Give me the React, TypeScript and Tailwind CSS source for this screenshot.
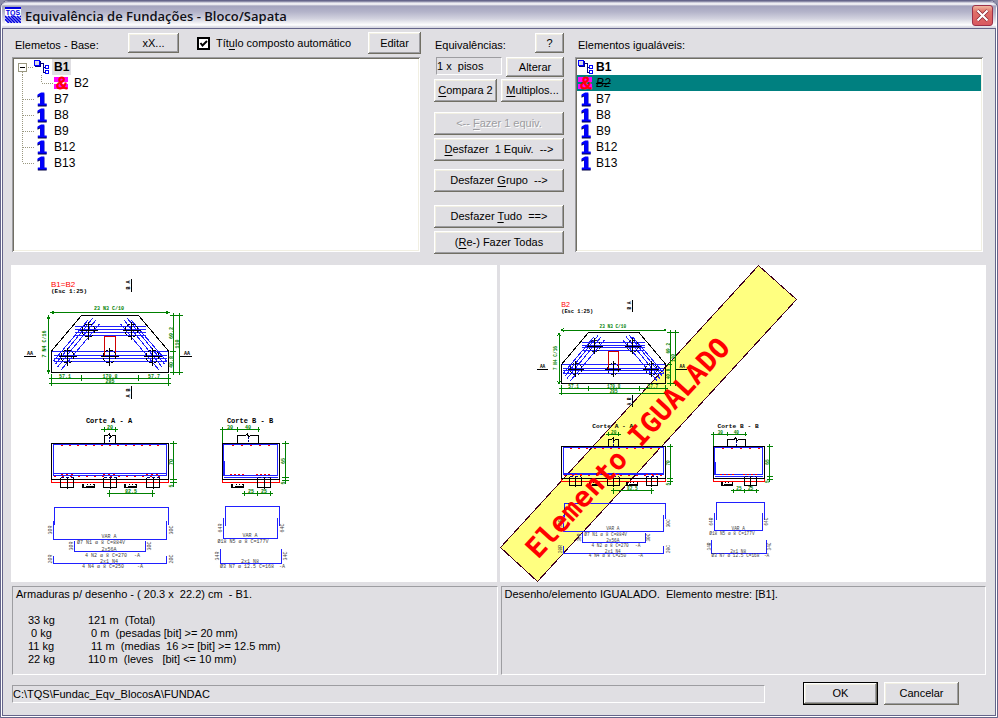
import type { ReactNode } from "react";

const BUTTON_FACE =
  "flex items-center justify-center whitespace-pre bg-[#e0dfe3] shadow-[inset_-1px_-1px_0_#716f64,inset_1px_1px_0_#ffffff,inset_-2px_-2px_0_#9d9da1,inset_2px_2px_0_#f1efe2]";

function PushButton({ className = "", children, disabled = false }: { className?: string; children: ReactNode; disabled?: boolean }) {
  return (
    <button
      type="button"
      disabled={disabled}
      className={`${BUTTON_FACE} ${disabled ? "text-[#9d9da1] [text-shadow:1px_1px_0_#ffffff]" : "text-black"} ${className}`}
    >
      <span>{children}</span>
    </button>
  );
}

function Key({ children }: { children: ReactNode }) {
  return <span className="underline underline-offset-2">{children}</span>;
}

function TqsLogo() {
  return (
    <svg viewBox="0 0 16 16" className="size-4 shrink-0" aria-hidden="true">
      <rect width="16" height="16" fill="#fff" />
      <rect width="16" height="2" fill="#0000e0" />
      <text x="8" y="8" textAnchor="middle" fontSize="7" fontFamily="Liberation Sans" fontWeight="700" fill="#0000e0">TQS</text>
      <g stroke="#0000e0" strokeWidth="1.7">
        <path d="M0 9l7 7M3 9l7 7M6 9l7 7M9 9l7 7M12 9l4 4M0 12l4 4M15 9l1 1" />
      </g>
    </svg>
  );
}

function GroupIcon() {
  return (
    <svg viewBox="0 0 16 16" className="size-4 shrink-0" shapeRendering="crispEdges" aria-hidden="true">
      <path d="M7 4.500h2.500v9H12M9.500 8.500H12" fill="none" stroke="#000080" />
      <rect x="0.500" y="1.500" width="5" height="5" fill="#d8d8e8" stroke="#0000ff" />
      <path d="M1 7.500h5.500V2" fill="none" stroke="#000080" />
      <rect x="11.500" y="6.500" width="3" height="3" fill="#fff" stroke="#0000ff" />
      <rect x="11.500" y="11.500" width="3" height="3" fill="#fff" stroke="#0000ff" />
    </svg>
  );
}

function LinkedIcon() {
  return (
    <svg viewBox="0 0 16 16" className="size-4 shrink-0 overflow-visible" aria-hidden="true">
      <rect x="0" y="2" width="14" height="5" fill="#ff00ff" />
      <rect x="0" y="9" width="14" height="5" fill="#ff00ff" />
      <text x="8" y="14" textAnchor="middle" fontSize="17" fontFamily="Liberation Sans" fill="#ff0000" stroke="#ff0000" strokeWidth="0.800">&amp;</text>
    </svg>
  );
}

function SingleIcon() {
  return (
    <svg viewBox="0 0 16 16" className="size-4 shrink-0 overflow-visible drop-shadow-[0_1px_0_#000040]" aria-hidden="true">
      <text x="8" y="14" textAnchor="middle" fontSize="17" fontFamily="DejaVu Serif" fontWeight="700" fill="#0000ff" stroke="#0000ff" strokeWidth="1">1</text>
    </svg>
  );
}

function Branch({ kind }: { kind: "root" | "through" | "tee" | "end" | "child" }) {
  return (
    <svg viewBox="0 0 20 16" className="h-4 w-5 shrink-0" shapeRendering="crispEdges" fill="none" aria-hidden="true">
      <g stroke="#9a9880" strokeDasharray="1 1">
        {kind === "root" && <path d="M14 8.500h6M8.500 13v3" />}
        {kind === "through" && <path d="M8.500 0v16" />}
        {kind === "tee" && <path d="M8.500 0v16M9 8.500h11" />}
        {kind === "end" && <path d="M8.500 0v8M9 8.500h11" />}
        {kind === "child" && <path d="M7.500 0v8M8 8.500h11" />}
      </g>
      {kind === "root" && (
        <>
          <rect x="4.500" y="4.500" width="8" height="8" fill="#fff" stroke="#9a9880" />
          <path d="M6 8.500h5" stroke="#000" />
        </>
      )}
    </svg>
  );
}

const TREE_FRAME =
  "mx-px h-[195px] bg-white p-[2px] text-[12px] leading-4 shadow-[inset_1px_1px_0_#9d9da1,inset_-1px_-1px_0_#ffffff,inset_2px_2px_0_#716f64,inset_-2px_-2px_0_#f1efe2]";

const SINGLES = ["B7", "B8", "B9", "B12", "B13"];

function BaseTree() {
  return (
    <ul className={TREE_FRAME} role="tree" aria-label="Elemetos - Base">
      <li className="flex h-4" role="treeitem">
        <Branch kind="root" />
        <GroupIcon />
        <span className="ml-0.5 bg-[#e0dfe3] px-0.5 font-bold">B1</span>
      </li>
      <li className="flex h-4" role="treeitem">
        <Branch kind="through" />
        <Branch kind="child" />
        <LinkedIcon />
        <span className="pl-1">B2</span>
      </li>
      {SINGLES.map((name, i) => (
        <li key={name} className="flex h-4" role="treeitem">
          <Branch kind={i === SINGLES.length - 1 ? "end" : "tee"} />
          <SingleIcon />
          <span className="pl-1">{name}</span>
        </li>
      ))}
    </ul>
  );
}

function EqualTree() {
  return (
    <ul className={TREE_FRAME} role="tree" aria-label="Elementos igualáveis">
      <li className="flex h-4 pl-px" role="treeitem">
        <GroupIcon />
        <span className="pl-0.5 font-bold">B1</span>
      </li>
      <li className="flex h-4 bg-[#008080] pl-px" role="treeitem" aria-selected="true">
        <LinkedIcon />
        <span className="pl-0.5 italic line-through">B2</span>
      </li>
      {SINGLES.map((name) => (
        <li key={name} className="flex h-4 pl-px" role="treeitem">
          <SingleIcon />
          <span className="pl-0.5">{name}</span>
        </li>
      ))}
    </ul>
  );
}

const PILES = [
  [88.5, 330.5],
  [131.5, 330.5],
  [67.5, 356.5],
  [109.5, 356.5],
  [152.5, 356.5],
];

function Note({ x, y, children, turn = false, size = 5, fill = "#008000" }: { x: number; y: number; children: ReactNode; turn?: boolean; size?: number; fill?: string }) {
  return (
    <text x={x} y={y} fontSize={size} fill={fill} textAnchor="middle" transform={turn ? `rotate(-90 ${x} ${y})` : undefined}>
      {children}
    </text>
  );
}

function PlanView({ title }: { title: string }) {
  return (
    <g>
      <text x="51" y="287" fontSize="8" fill="#ff0000" fontFamily="Liberation Sans">{title}</text>
      <text x="51" y="293" fontSize="6" fontWeight="700" fill="#000">(Esc 1:25)</text>
      <g stroke="#2020ff">
        <path d="M74.500 326.500h71M74.500 329.500h71M74.500 332.500h71M74.500 335.500h71" />
        <path d="M52 351.500h116M53.500 355.500h113M53.500 358.500h113M53.500 361.500h113" />
        <path d="M55.500 364L92.500 318.500M57.500 367L96 320M61 370L99.500 324M53.500 361L88 320" />
        <path d="M164.500 364L127.500 318.500M162 367L124 320M159 370L120.500 324M166.500 361L131 320" />
      </g>
      <path d="M51.500 372.500V351L81.500 315.500h57L168.500 351v21.500z" stroke="#000" />
      <path d="M104.500 356v-19.500h11V356" stroke="#d00000" />
      {PILES.map(([x, y]) => (
        <g key={`${x}-${y}`} stroke="#000">
          <path d={`M${x - 9} ${y}h18M${x} ${y - 9}v18`} />
          <circle cx={x} cy={y} r="6.500" strokeDasharray="3 2" />
        </g>
      ))}
      <g stroke="#008000">
        <path d="M51 312.500h118M54 311l-3 1.500 3 1.500M166 311l3 1.500-3 1.500" />
        <path d="M48.500 316v57M47 319l1.500-3 1.500 3M47 370l1.500 3 1.500-3" />
        <path d="M173.500 313v62M179.500 313v62M170 315.500h13M170 351.500h6M170 372.500h13" />
        <path d="M49 378.500h122M49 383.500h122M51.500 374v12M81.500 375v6M138.500 375v6M168.500 374v12" />
      </g>
      <g fontWeight="700">
        <Note x={109} y={310}>23 N3 C/10</Note>
        <Note x={46} y={344} turn>7 N4 C/16</Note>
        <Note x={173} y={333} turn>69.2</Note>
        <Note x={173} y={362} turn>40.8</Note>
        <Note x={179} y={344} turn>110</Note>
        <Note x={65} y={378}>57.1</Note>
        <Note x={110} y={378}>170.8</Note>
        <Note x={154} y={378}>57.7</Note>
        <Note x={110} y={383}>285</Note>
      </g>
      <path d="M131.500 279v13M131.500 386v13M24 356.500h12M180 356.500h12" stroke="#000" />
      <g fill="#000" fontWeight="700">
        <Note x={130} y={282} turn fill="#000">A</Note>
        <Note x={130} y={288} turn fill="#000">B</Note>
        <Note x={130} y={390} turn fill="#000">B</Note>
        <Note x={130} y={396} turn fill="#000">A</Note>
        <Note x={30} y={355} fill="#000">AA</Note>
        <Note x={187} y={355} fill="#000">AA</Note>
      </g>
    </g>
  );
}

function Pile({ x }: { x: number }) {
  return (
    <g stroke="#000">
      <path d={`M${x} 477.500v10h13v-10M${x + 6.5} 477v12M${x} 479.500h13`} />
      <path d={`M${x} 477.500h13`} strokeDasharray="3 2" stroke="#000080" />
    </g>
  );
}

function Block({ x }: { x: number }) {
  return (
    <g stroke="#000">
      <path d={`M${x} 483.500v4h12v-4M${x + 1} 484v3M${x + 3} 486.500h9`} />
      <path d={`M${x + 4} 484.500h7`} strokeDasharray="1 2" />
    </g>
  );
}

function SectionA() {
  return (
    <g>
      <Note x={109} y={423} size={7} fill="#000"><tspan fontWeight="700">Corte A - A</tspan></Note>
      <path d="M104.500 443v-7.500h3l2-2 1 4 2-2h3v7.500" stroke="#000" />
      <path d="M109.500 437v7" stroke="#000080" strokeDasharray="2 1" />
      <path d="M51.500 443.500h117v36h-117z" stroke="#000" />
      <path d="M53.500 444.500h113v31h-113zM53.500 473.500h113" stroke="#2020ff" />
      <path d="M61 445.500h104" stroke="#ff0000" strokeDasharray="2 6" />
      <path d="M61 474.500h14M103 474.500h14M146 474.500h14" stroke="#ff0000" strokeDasharray="2 3" />
      <path d="M54 476.500h112" stroke="#ff0000" strokeDasharray="2 6" />
      <path d="M51.500 480v2.500h117V480" stroke="#ff0000" />
      <Pile x={60.5} />
      <Pile x={103.5} />
      <Pile x={146.5} />
      <Block x={82.5} />
      <Block x={124.5} />
      <g stroke="#008000">
        <path d="M101 429.500h17M104.500 427v5M115.500 427v5" />
        <path d="M173.500 441v46M170 443.500h7M170 479.500h7M170 482.500h7" />
        <path d="M107 493.500h48M109.500 490v7M152.500 490v7" />
      </g>
      <g fontWeight="700">
        <Note x={110} y={429}>20</Note>
        <Note x={173} y={462} turn>70</Note>
        <Note x={173} y={486} turn>5</Note>
        <Note x={131} y={493}>82.5</Note>
      </g>
      <path d="M54.500 525v-17.500h114V525M53.500 521v18.500h113V521" stroke="#2020ff" />
      <path d="M74.500 541v10.500h71V541M53.500 556v7.500h113V556" stroke="#2020ff" />
      <Note x={109} y={538} fill="#404040">VAR A</Note>
      <Note x={101} y={544} fill="#404040">Ø7 N1 ø 8 C=884V</Note>
      <Note x={109} y={551} fill="#404040">2x56A</Note>
      <Note x={106} y={557} fill="#404040">4 N2 ø 8 C=270</Note>
      <Note x={137} y={557} fill="#404040">-A</Note>
      <Note x={109} y={563} fill="#404040">2x1 N4</Note>
      <Note x={103} y={568} fill="#404040">4 N4 ø 8 C=250</Note>
      <Note x={140} y={568} fill="#404040">-A</Note>
      <Note x={52} y={530} turn fill="#404040">30R</Note>
      <Note x={173} y={530} turn fill="#404040">30C</Note>
      <Note x={73} y={546} turn fill="#404040">30R</Note>
      <Note x={151} y={546} turn fill="#404040">30C</Note>
      <Note x={52} y={559} turn fill="#404040">20R</Note>
      <Note x={173} y={559} turn fill="#404040">20C</Note>
    </g>
  );
}

function SectionB() {
  return (
    <g>
      <Note x={250} y={423} size={7} fill="#000"><tspan fontWeight="700">Corte B - B</tspan></Note>
      <path d="M237.500 443v-7.500h8l2-2 1 4 2-2h8v7.500" stroke="#000" />
      <path d="M248.500 437v7" stroke="#000080" strokeDasharray="2 1" />
      <path d="M222.500 443.500h57v36h-57z" stroke="#000" />
      <path d="M223.500 444.500h54v31h-54zM224.500 461v14M223.500 477.500h54" stroke="#2020ff" />
      <path d="M232 445.500h44" stroke="#ff0000" strokeDasharray="2 7" />
      <path d="M230 474.500h16M256 474.500h16" stroke="#ff0000" strokeDasharray="2 2" />
      <path d="M222.500 480v2.500h57V480" stroke="#ff0000" />
      <Pile x={257.5} />
      <Block x={231.5} />
      <g stroke="#008000">
        <path d="M220 429.500h40M222.500 427v16M237.500 427v5M258.500 427v5" />
        <path d="M285.500 441v43M282 443.500h7M282 477.500h7M282 480.500h7" />
        <path d="M242 493.500h31M244.500 491v5M257.500 491v5M270.500 491v5" />
      </g>
      <g fontWeight="700">
        <Note x={230} y={429}>30</Note>
        <Note x={248} y={429}>40</Note>
        <Note x={285} y={461} turn>65</Note>
        <Note x={285} y={483} turn>5</Note>
        <Note x={251} y={493}>25</Note>
        <Note x={264} y={493}>25</Note>
      </g>
      <path d="M225.500 526v-19.500h54V526M223.500 518v20.500h54V518M220.500 549v14.500h61V549" stroke="#2020ff" />
      <Note x={250} y={537} fill="#404040">VAR A</Note>
      <Note x={243} y={543} fill="#404040">Ø18 N5 ø 8 C=177V</Note>
      <Note x={250} y={563} fill="#404040">2x1 N8</Note>
      <Note x={247} y={568} fill="#404040">Ø3 N7 ø 12.5 C=168</Note>
      <Note x={282} y={568} fill="#404040">-A</Note>
      <Note x={222} y={528} turn fill="#404040">64R</Note>
      <Note x={284} y={528} turn fill="#404040">64C</Note>
      <Note x={219} y={556} turn fill="#404040">34R</Note>
      <Note x={287} y={556} turn fill="#404040">34C</Note>
    </g>
  );
}

function Drawing({ title }: { title: string }) {
  return (
    <g fill="none" fontFamily="Liberation Mono, monospace" shapeRendering="crispEdges" className="[&_path]:[vector-effect:non-scaling-stroke]">
      <PlanView title={title} />
      <SectionA />
      <SectionB />
    </g>
  );
}

const INFO_BOX =
  "h-[89px] min-w-0 flex-1 border border-b-white border-l-[#9d9da1] border-r-white border-t-[#9d9da1] px-[3px] pt-px leading-[13px] whitespace-pre";

const TOTALS = [
  ["33 kg", "121 m  (Total)"],
  [" 0 kg", " 0 m  (pesadas [bit] >= 20 mm)"],
  ["11 kg", " 11 m  (medias  16 >= [bit] >= 12.5 mm)"],
  ["22 kg", "110 m  (leves   [bit] <= 10 mm)"],
];

export default function App() {
  return (
    <div className="bg-[#8f8fa8]">
      <main className="flex min-h-screen flex-col rounded-t-lg border border-[#65658a] bg-white px-px pb-px font-['Liberation_Sans',Arial,sans-serif] text-[11px] text-black">
        <header className="flex h-[27px] shrink-0 items-center gap-1 rounded-t-md border-t border-[#8c8ca8] bg-[linear-gradient(#b8b8cc_0px,#ffffff_2px,#a4a4be_4px,#b4b4ca_10px,#d4d4e0_17px,#ffffff_23px,#d8d8e2_25px)] px-[3px]">
          <TqsLogo />
          <h1 className="flex-1 pt-0.5 font-['Open_Sans',sans-serif] text-[13px] leading-5 font-semibold text-[#101018]">
            Equivalência de Fundações - Bloco/Sapata
          </h1>
          <button
            type="button"
            aria-label="Fechar"
            className="flex size-[21px] items-center justify-center rounded-[3px] border border-[#9c3048] bg-[linear-gradient(#f0b8a0,#e07068_30%,#d85860)]"
          >
            <svg viewBox="0 0 13 13" className="size-[13px]" aria-hidden="true">
              <path d="M1.500 1.500l10 10M11.500 1.500l-10 10" stroke="#802030" strokeWidth="3.500" />
              <path d="M1.500 1.500l10 10M11.500 1.500l-10 10" stroke="#fff" strokeWidth="2.200" />
            </svg>
          </button>
        </header>

        <div className="flex flex-1 flex-col border border-[#65658a] bg-[#e0dfe3] pr-[9px] pb-[9px] pl-2">
          <div className="flex pr-0.5">
            <section className="min-w-0 flex-1">
              <div className="flex h-7 items-center">
                <h2 className="w-[117px] pt-1 pl-1">Elemetos - Base:</h2>
                <PushButton className="h-5 w-[51px]">xX...</PushButton>
                <label className="ml-[18px] flex items-center gap-1.5">
                  <span className="relative flex size-[13px]">
                    <input type="checkbox" defaultChecked className="peer size-[13px] appearance-none border-2 border-black bg-white" />
                    <svg viewBox="0 0 13 13" className="pointer-events-none absolute inset-0 hidden size-[13px] peer-checked:block" aria-hidden="true">
                      <path d="M3.500 6l2 2.500 4.500-4.500" fill="none" stroke="#000" strokeWidth="2" />
                    </svg>
                  </span>
                  <span>Tít<Key>u</Key>lo composto automático</span>
                </label>
                <PushButton className="ml-auto h-[22px] w-[53px]">Editar</PushButton>
              </div>
              <BaseTree />
            </section>

            <section className="mr-2.5 ml-[13px] w-[130px] shrink-0">
              <div className="flex h-7 items-center justify-between">
                <h2 className="pt-1 pl-px">Equivalências:</h2>
                <PushButton className="h-5 w-[29px]">?</PushButton>
              </div>
              <div className="flex items-start justify-between">
                <output className="ml-0.5 h-[18px] w-[66px] border border-b-white border-l-[#9d9da1] border-r-white border-t-[#9d9da1] leading-4 whitespace-pre">1 x  pisos</output>
                <PushButton className="h-5 w-[58px]">Alterar</PushButton>
              </div>
              <div className="mt-0.5 flex justify-between">
                <PushButton className="h-[23px] w-[63px]"><Key>C</Key>ompara 2</PushButton>
                <PushButton className="h-[23px] w-[63px]"><Key>M</Key>ultiplos...</PushButton>
              </div>
              <PushButton disabled className="mt-2.5 h-[23px] w-full">{"<-- "}<Key>F</Key>azer 1 equiv.</PushButton>
              <PushButton className="mt-[3px] h-[23px] w-full"><Key>D</Key>{"esfazer  1 Equiv.  -->"}</PushButton>
              <PushButton className="mt-2 h-[23px] w-full">Desfazer <Key>G</Key>{"rupo  -->"}</PushButton>
              <PushButton className="mt-[13px] h-[23px] w-full">Desfazer <Key>T</Key>{"udo  ==>"}</PushButton>
              <PushButton className="mt-[3px] h-[23px] w-full">(<Key>R</Key>e-) Fazer Todas</PushButton>
            </section>

            <section className="min-w-0 flex-1">
              <div className="flex h-7 items-center">
                <h2 className="pt-1 pl-1">Elementos igualáveis:</h2>
              </div>
              <EqualTree />
            </section>
          </div>

          <div className="mt-[11px] flex gap-[3px]">
            <svg viewBox="11 265 486 317" className="h-[317px] min-w-0 flex-1 bg-white" role="img" aria-label="Desenho B1">
              <Drawing title="B1=B2" />
            </svg>
            <svg viewBox="500 265 486 317" className="h-[317px] min-w-0 flex-1 bg-white" role="img" aria-label="Desenho B2">
              <path d="M500.500 547.500L758.500 265.500 796.500 299.500 537.500 581.500z" fill="#ffff80" stroke="#400020" shapeRendering="crispEdges" />
              <g transform="translate(515.9 52.2) scale(0.889)">
                <Drawing title="B2" />
              </g>
              <text transform="translate(538 560) rotate(-47.5)" fontSize="28" fontWeight="700" fontFamily="DejaVu Sans Mono, monospace" fill="#ff0000">
                Elemento IGUALADO
              </text>
            </svg>
          </div>

          <div className="mt-1 flex gap-[3px] pl-px">
            <div className={INFO_BOX}>
              <p>{"Armaduras p/ desenho - ( 20.3 x  22.2) cm  - B1."}</p>
              <dl className="pt-[13px] pl-3">
                {TOTALS.map(([weight, length]) => (
                  <div key={weight} className="flex">
                    <dt className="w-[60px]">{weight}</dt>
                    <dd>{length}</dd>
                  </div>
                ))}
              </dl>
            </div>
            <div className={INFO_BOX}>
              <p>{"Desenho/elemento IGUALADO.  Elemento mestre: [B1]."}</p>
            </div>
          </div>

          <footer className="mt-[7px] flex items-center pr-[27px] pl-px">
            <p className="h-[18px] flex-1 border border-b-white border-l-[#9d9da1] border-r-white border-t-[#9d9da1] leading-4">
              C:\TQS\Fundac_Eqv_BlocosA\FUNDAC
            </p>
            <div className="ml-[38px] border border-black">
              <PushButton className="h-[21px] w-[73px]">OK</PushButton>
            </div>
            <PushButton className="ml-1.5 h-[23px] w-[75px]">Cancelar</PushButton>
          </footer>
        </div>
      </main>
    </div>
  );
}
